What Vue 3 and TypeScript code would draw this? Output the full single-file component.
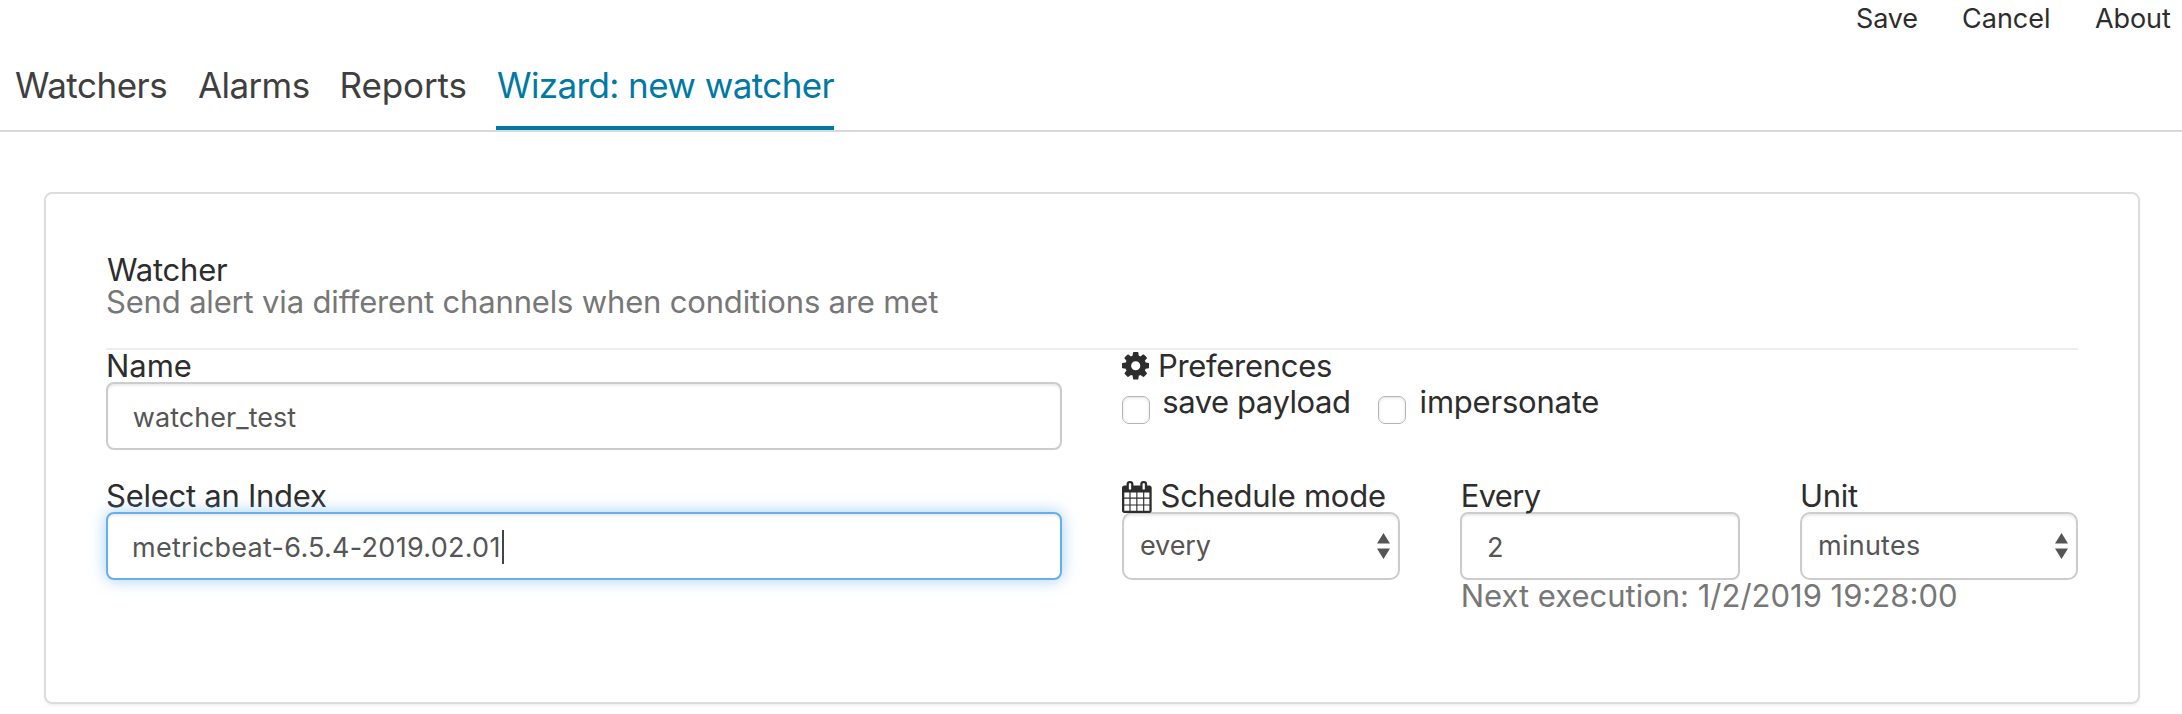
<script setup lang="ts">
import { ref } from 'vue'

interface Item {
  id: string
  label: string
}

const actions: Item[] = [
  { id: 'save', label: 'Save' },
  { id: 'cancel', label: 'Cancel' },
  { id: 'about', label: 'About' },
]

const tabs: Item[] = [
  { id: 'watchers', label: 'Watchers' },
  { id: 'alarms', label: 'Alarms' },
  { id: 'reports', label: 'Reports' },
  { id: 'wizard', label: 'Wizard: new watcher' },
]

const activeTab = ref('wizard')
const name = ref('watcher_test')
const index = ref('metricbeat-6.5.4-2019.02.01')
const interval = ref(2)
const savePayload = ref(false)
const impersonate = ref(false)
</script>

<template>
  <div class="page">
    <header class="actions">
      <a v-for="a in actions" :key="a.id" :class="['action', a.id]">{{ a.label }}</a>
    </header>

    <nav class="tabs">
      <a
        v-for="t in tabs"
        :key="t.id"
        :class="['tab', t.id, { active: t.id === activeTab }]"
        @click="activeTab = t.id"
      >{{ t.label }}</a>
    </nav>

    <main class="panel">
      <div class="title">Watcher</div>
      <div class="subtitle">Send alert via different channels when conditions are met</div>
      <div class="rule"></div>

      <div class="row first">
        <section>
          <div class="label name">Name</div>
          <div class="field plain">{{ name }}</div>
        </section>
        <section>
          <div class="label prefs">
            <svg class="cog" viewBox="128 128 1536 1536" aria-hidden="true">
              <path d="M1152 896q0-106-75-181t-181-75-181 75-75 181 75 181 181 75 181-75 75-181zm512-109v222q0 12-8 23t-20 13l-185 28q-19 54-39 91 35 50 107 138 10 12 10 25t-9 23q-27 37-99 108t-94 71q-12 0-26-9l-138-108q-44 23-91 38-16 136-29 186-7 28-36 28h-222q-14 0-24.5-8.5t-11.5-21.5l-28-184q-49-16-90-37l-141 107q-10 9-25 9-14 0-25-11-126-114-165-168-7-10-7-23 0-12 8-23 15-21 51-66.5t54-70.5q-27-50-41-99l-183-27q-13-2-21-12.5t-8-23.5v-222q0-12 8-23t19-13l186-28q14-46 39-92-40-57-107-138-10-12-10-24 0-10 9-23 26-36 98.5-107.5t94.5-71.5q13 0 26 10l138 107q44-23 91-38 16-136 29-186 7-28 36-28h222q14 0 24.5 8.5t11.5 21.5l28 184q49 16 90 37l142-107q9-9 24-9 13 0 25 10 129 119 165 170 7 8 7 22 0 12-8 23-15 21-51 66.5t-54 70.5q26 50 41 98l183 28q13 2 21 12.5t8 23.5z" />
            </svg>
            <span>Preferences</span>
          </div>
          <div class="checks">
            <label class="check payload" @click.prevent="savePayload = !savePayload">
              <span class="box"></span><span>save payload</span>
            </label>
            <label class="check imp" @click.prevent="impersonate = !impersonate">
              <span class="box"></span><span>impersonate</span>
            </label>
          </div>
        </section>
      </div>

      <div class="row">
        <section>
          <div class="label index">Select an Index</div>
          <div class="field wide focused">{{ index }}<i class="caret"></i></div>
        </section>
        <section class="schedule">
          <div class="mode">
            <div class="label sched">
              <svg class="calendar" viewBox="64 0 1664 1792" aria-hidden="true">
                <path d="M192 1664h288v-288h-288v288zm352 0h320v-288h-320v288zm-352-352h288v-320h-288v320zm352 0h320v-320h-320v320zm-352-384h288v-288h-288v288zm736 736h320v-288h-320v288zm-384-736h320v-288h-320v288zm768 736h288v-288h-288v288zm-384-352h320v-320h-320v320zm-352-864v-288q0-13-9.5-22.5t-22.5-9.5h-64q-13 0-22.5 9.5t-9.5 22.5v288q0 13 9.5 22.5t22.5 9.5h64q13 0 22.5-9.5t9.5-22.5zm736 864h288v-320h-288v320zm-384-384h320v-288h-320v288zm384 0h288v-288h-288v288zm32-480v-288q0-13-9.5-22.5t-22.5-9.5h-64q-13 0-22.5 9.5t-9.5 22.5v288q0 13 9.5 22.5t22.5 9.5h64q13 0 22.5-9.5t9.5-22.5zm384-64v1280q0 52-38 90t-90 38h-1408q-52 0-90-38t-38-90v-1280q0-52 38-90t90-38h128v-96q0-66 47-113t113-47h64q66 0 113 47t47 113v96h384v-96q0-66 47-113t113-47h64q66 0 113 47t47 113v96h128q52 0 90 38t38 90z" />
              </svg>
              <span>Schedule mode</span>
            </div>
            <div class="field select every-select">
              <span>every</span>
              <svg class="arrows" viewBox="0 0 13 26" aria-hidden="true"><path d="M6.5 0 13 10.5H0zM0 15.5h13L6.5 26z" /></svg>
            </div>
          </div>
          <div class="interval">
            <div class="label every">Every</div>
            <div class="field count">{{ interval }}</div>
            <div class="next">Next execution: 1/2/2019 19:28:00</div>
          </div>
          <div class="unit">
            <div class="label">Unit</div>
            <div class="field select minutes-select">
              <span>minutes</span>
              <svg class="arrows" viewBox="0 0 13 26" aria-hidden="true"><path d="M6.5 0 13 10.5H0zM0 15.5h13L6.5 26z" /></svg>
            </div>
          </div>
        </section>
      </div>
    </main>
  </div>
</template>

<style>
body {
  margin: 0;
  background: #fff;
}
</style>

<style scoped>
.page {
  height: 714px;
  overflow: hidden;
  box-sizing: border-box;
  font-family: Inter, "Liberation Sans", sans-serif;
  color: #2d2d2d;
  white-space: nowrap;
}
.actions {
  display: flex;
  justify-content: flex-end;
  gap: 44px;
  height: 36px;
  padding-right: 11px;
  font-size: 27px;
  line-height: 38px;
}
.action.save { width: 62px; letter-spacing: -0.15px; }
.action.cancel { width: 89px; letter-spacing: 0; }
.action.about { width: 76px; letter-spacing: -0.08px; }

.tabs {
  display: flex;
  gap: 30px;
  height: 94px;
  padding-left: 15px;
  border-bottom: 2px solid #d9d9d9;
  font-size: 35px;
  line-height: 48px;
  color: #3f3f3f;
}
.tab {
  box-sizing: border-box;
  height: 94px;
  padding-top: 25px;
  border-bottom: 4px solid transparent;
  cursor: pointer;
}
.tab.watchers { width: 153px; letter-spacing: -0.5px; }
.tab.alarms { width: 111px; letter-spacing: -0.6px; }
.tab.reports { width: 127px; padding-left: 0.5px; letter-spacing: -0.1px; }
.tab.wizard { width: 338px; padding-left: 1px; letter-spacing: -0.6px; }
.tab.active {
  color: #0079a5;
  border-bottom-color: #0079a5;
}

.panel {
  box-sizing: border-box;
  height: 512px;
  margin: 60px 42px 0 44px;
  padding: 60px;
  border: 2px solid #ddd;
  border-radius: 8px;
  box-shadow: 0 2px 2px rgba(0, 0, 0, 0.05);
  font-size: 31px;
  line-height: 32px;
}
.title { padding-left: 1px; letter-spacing: -0.22px; }
.subtitle {
  color: #777;
  letter-spacing: -0.17px;
}
.rule {
  height: 2px;
  margin-top: 30px;
  background: #eee;
}
.row {
  display: grid;
  grid-template-columns: 956px 956px;
  gap: 60px;
}
.row.first { margin-bottom: 30px; }

.label {
  display: flex;
  align-items: center;
  height: 32px;
  letter-spacing: -0.26px;
}
.label.name { letter-spacing: -0.04px; }
.label.prefs span { margin-left: 8.5px; letter-spacing: -0.29px; }
.label.sched span { margin-left: 8.8px; letter-spacing: -0.24px; }
.label.every { padding-left: 0.7px; letter-spacing: -0.67px; }
.cog {
  flex: none;
  width: 27.4px;
  height: 27.4px;
  fill: #2d2d2d;
}
.calendar {
  flex: none;
  width: 29.7px;
  height: 32px;
  margin-top: 1px;
  fill: #2d2d2d;
}

.checks {
  display: flex;
  padding-top: 4px;
}
.check {
  display: flex;
  height: 38px;
}
.check.payload { width: 256px; letter-spacing: -0.44px; }
.check.imp { letter-spacing: -0.22px; }
.check .box {
  box-sizing: border-box;
  width: 28px;
  height: 28px;
  margin: 10px 12.3px 0 0;
  border: 1.5px solid #b4b4b4;
  border-radius: 7px;
  background: #fff;
  box-shadow: inset 0 1px 3px rgba(0, 0, 0, 0.12);
}
.check.imp .box { margin-right: 13.6px; }

.field {
  box-sizing: border-box;
  display: flex;
  align-items: center;
  height: 68px;
  padding: 4px 24px 0;
  border: 2px solid #ccc;
  border-radius: 8px;
  background: #fff;
  box-shadow: inset 0 2px 2px rgba(0, 0, 0, 0.075);
  color: #555;
  font-size: 27px;
  line-height: 34px;
}
.field.plain { padding-left: 24.8px; letter-spacing: 0.05px; }
.field.count { padding-left: 25px; }
.field.wide { letter-spacing: 0.28px; }
.field.focused {
  position: relative;
  border-color: #66afe9;
  box-shadow: inset 0 2px 2px rgba(0, 0, 0, 0.075), 0 0 16px rgba(102, 175, 233, 0.6);
}
.caret {
  width: 2px;
  height: 34px;
  margin: -3px 0 0 1px;
  background: #444;
}
.field.select {
  justify-content: space-between;
  padding: 0 8px 0 16px;
  border-radius: 10px;
}
.every-select { letter-spacing: -0.1px; }
.minutes-select { letter-spacing: 0.25px; }
.arrows {
  flex: none;
  width: 13px;
  height: 26px;
  fill: #555;
}

.schedule {
  display: grid;
  grid-template-columns: 278px 280px 278px;
  gap: 60px;
}
.next {
  width: 497px;
  padding-left: 0.7px;
  color: #777;
}
</style>
